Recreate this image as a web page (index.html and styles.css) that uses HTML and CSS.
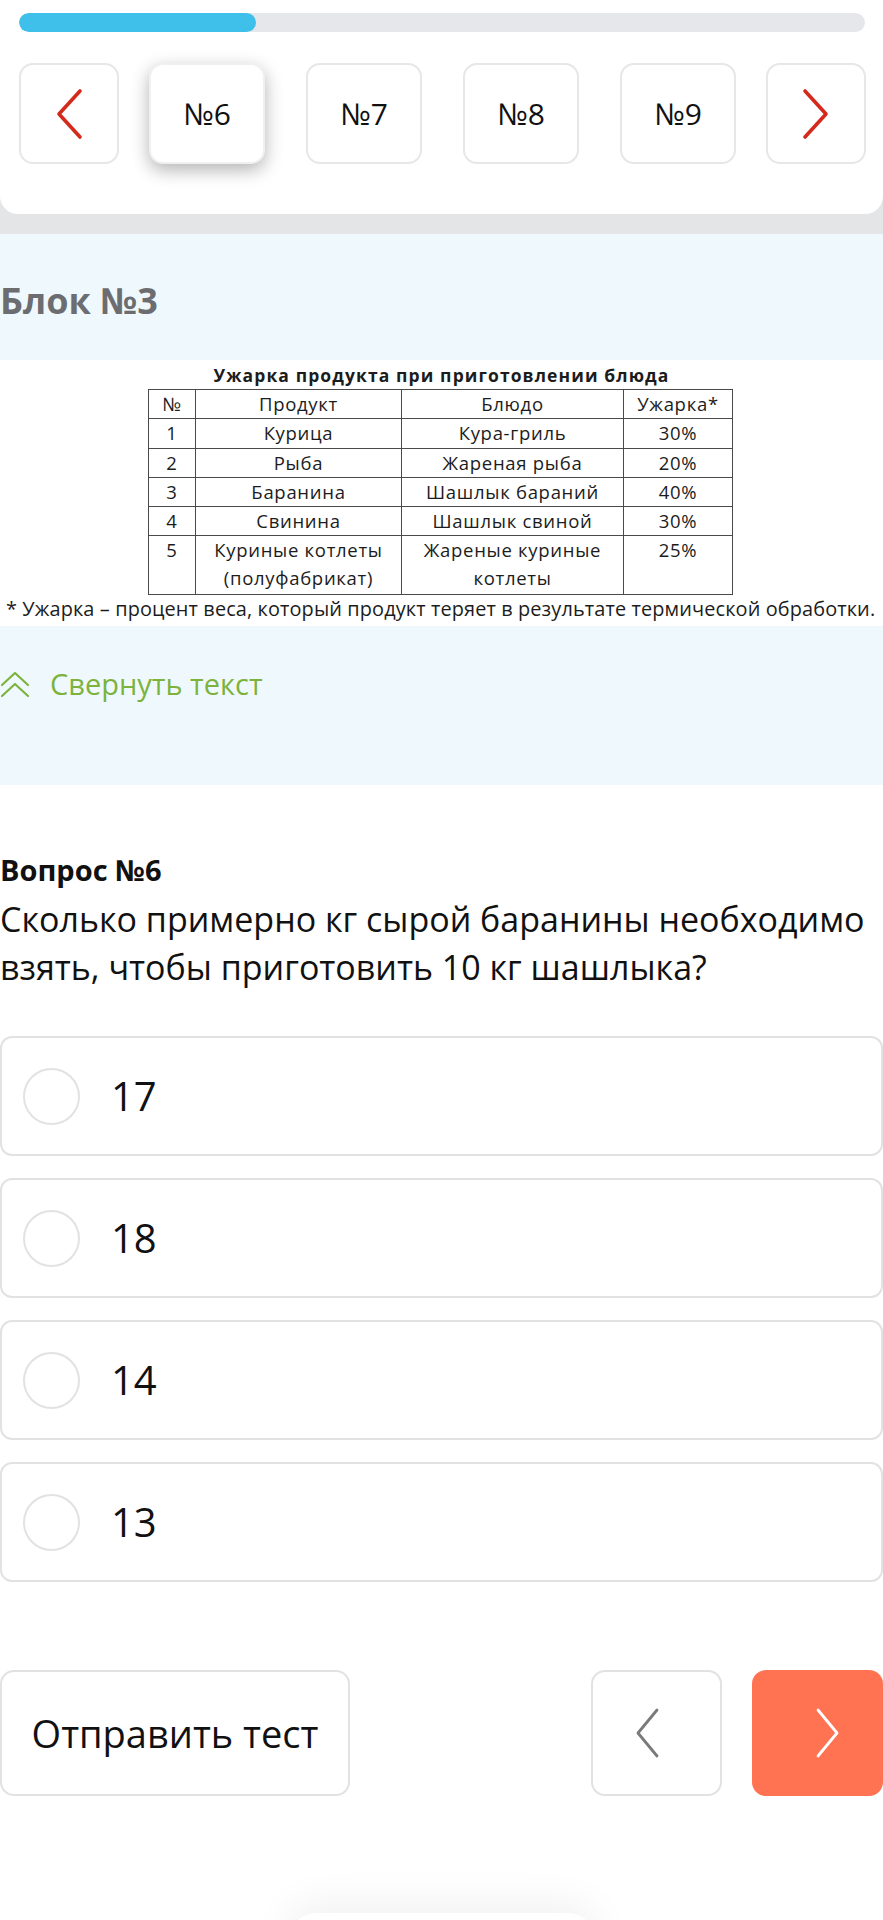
FILE: index.html
```html
<!DOCTYPE html>
<html lang="ru">
<head>
<meta charset="utf-8">
<title>Тест</title>
<link rel="stylesheet" href="styles.css">
</head>
<body>
<div class="top">
  <div class="nav-card">
    <div class="progress"><div class="progress-fill" style="width: 28%"></div></div>
    <div class="pager">
      <div class="pbtn arrow">
        <svg width="28" height="52" viewBox="0 0 28 52"><path d="M25 3 L4 26 L25 49" fill="none" stroke="#d42a1c" stroke-width="3.6" stroke-linecap="round" stroke-linejoin="round"/></svg>
      </div>
      <div class="nums">
        <div class="pbtn num active">№6</div>
        <div class="pbtn num">№7</div>
        <div class="pbtn num">№8</div>
        <div class="pbtn num">№9</div>
      </div>
      <div class="pbtn arrow">
        <svg width="28" height="52" viewBox="0 0 28 52"><path d="M3 3 L24 26 L3 49" fill="none" stroke="#d42a1c" stroke-width="3.6" stroke-linecap="round" stroke-linejoin="round"/></svg>
      </div>
    </div>
  </div>
</div>

<div class="block-head">Блок №3</div>

<div class="table-wrap">
  <div class="t-title">Ужарка продукта при приготовлении блюда</div>
  <table class="data">
    <tr><td class="c1">№</td><td class="c2">Продукт</td><td class="c3">Блюдо</td><td class="c4">Ужарка*</td></tr>
    <tr><td>1</td><td>Курица</td><td>Кура-гриль</td><td>30%</td></tr>
    <tr><td>2</td><td>Рыба</td><td>Жареная рыба</td><td>20%</td></tr>
    <tr><td>3</td><td>Баранина</td><td>Шашлык бараний</td><td>40%</td></tr>
    <tr><td>4</td><td>Свинина</td><td>Шашлык свиной</td><td>30%</td></tr>
    <tr class="tall"><td>5</td><td>Куриные котлеты<br>(полуфабрикат)</td><td>Жареные куриные<br>котлеты</td><td>25%</td></tr>
  </table>
  <div class="t-note">* Ужарка – процент веса, который продукт теряет в результате термической обработки.</div>
</div>

<div class="collapse">
  <svg class="dbl" width="30" height="30" viewBox="0 0 30 30"><path d="M2 15 L15 3 L28 15 M2 26 L15 14 L28 26" fill="none" stroke="#7db33c" stroke-width="2.2" stroke-linecap="round" stroke-linejoin="round"/></svg>
  <span>Свернуть текст</span>
</div>

<div class="question">
  <div class="q-label">Вопрос №6</div>
  <div class="q-text">Сколько примерно кг сырой баранины необходимо взять, чтобы приготовить 10 кг шашлыка?</div>
  <div class="answers">
    <div class="answer"><span class="radio"></span><span class="a-text">17</span></div>
    <div class="answer"><span class="radio"></span><span class="a-text">18</span></div>
    <div class="answer"><span class="radio"></span><span class="a-text">14</span></div>
    <div class="answer"><span class="radio"></span><span class="a-text">13</span></div>
  </div>
</div>

<div class="actions">
  <div class="send">Отправить тест</div>
  <div class="spacer"></div>
  <div class="step prev">
    <svg width="26" height="52" viewBox="0 0 26 52"><path d="M23 3 L4 26 L23 49" fill="none" stroke="#7a7a7a" stroke-width="2.8" stroke-linecap="round" stroke-linejoin="round"/></svg>
  </div>
  <div class="step next">
    <svg width="26" height="52" viewBox="0 0 26 52"><path d="M3 3 L22 26 L3 49" fill="none" stroke="#ffffff" stroke-width="2.8" stroke-linecap="round" stroke-linejoin="round"/></svg>
  </div>
</div>

<div class="bottom-pill"></div>
</body>
</html>
```

FILE: styles.css
```css
html, body {
  margin: 0;
  padding: 0;
  background: #ffffff;
  font-family: "Open Sans", "Noto Sans", sans-serif;
  color: #111;
  overflow: hidden;
}

.top {
  background: #e4e5e7;
  padding-bottom: 20px;
}

.nav-card {
  background: #ffffff;
  border-radius: 0 0 18px 18px;
  padding: 13px 18px 50px 19px;
}

.progress {
  height: 19px;
  border-radius: 10px;
  background: #e6e7ea;
  overflow: hidden;
}

.progress-fill {
  height: 100%;
  background: #3ec0ea;
  border-radius: 10px;
}

.pager {
  margin-top: 31px;
  display: flex;
  align-items: center;
  gap: 30px;
}

.nums {
  display: flex;
  gap: 41px;
}

.pbtn {
  box-sizing: border-box;
  height: 101px;
  border: 2px solid #e7e7e7;
  border-radius: 14px;
  background: #fff;
  display: flex;
  align-items: center;
  justify-content: center;
  flex: none;
}

.pbtn.arrow { width: 100px; }
.pbtn.num {
  width: 116px;
  font-size: 30px;
  color: #111;
}

.pbtn.active {
  border-color: #f0f0f0;
  box-shadow: 0 6px 18px rgba(0, 0, 0, 0.3);
}

.block-head {
  background: #eff9fd;
  height: 126px;
  box-sizing: border-box;
  padding-top: 43px;
  font-size: 36px;
  font-weight: 700;
  color: #6c6d70;
  line-height: 48px;
}

.table-wrap {
  background: #fff;
  height: 266px;
  box-sizing: border-box;
  padding-top: 2px;
  font-family: "Open Sans", sans-serif;
  color: #1c1c1c;
  overflow: hidden;
}

.t-title {
  text-align: center;
  font-weight: 700;
  font-size: 17.5px;
  letter-spacing: 1.1px;
  line-height: 26px;
}

.data {
  margin: 1px 0 0 148px;
  border-collapse: collapse;
  table-layout: fixed;
  width: 584px;
  font-size: 18.5px;
  letter-spacing: 0.7px;
  line-height: 28px;
}

.data td {
  box-sizing: border-box;
  border: 1.5px solid #4a4a4a;
  text-align: center;
  vertical-align: top;
  padding: 0;
  height: 29.3px;
}

.data .c1 { width: 47px; }
.data .c2 { width: 206px; }
.data .c3 { width: 222px; }
.data .c4 { width: 109px; }

.data .tall td { height: 58.6px; }

.t-note {
  font-size: 19.9px;
  letter-spacing: 0.12px;
  line-height: 26px;
  margin: 1px 0 0 6px;
  white-space: nowrap;
}

.collapse {
  background: #eff9fd;
  height: 159px;
  box-sizing: border-box;
  padding-top: 38px;
  display: flex;
  align-items: flex-start;
  gap: 20px;
  color: #7db33c;
  font-size: 29px;
  line-height: 40px;
}

.collapse .dbl {
  margin-top: 6px;
  flex: none;
}

.question {
  padding-top: 67px;
}

.q-label {
  font-size: 29px;
  font-weight: 700;
  line-height: 36px;
}

.q-text {
  margin-top: 7px;
  font-size: 34px;
  line-height: 48px;
}

.answers {
  margin-top: 45px;
  display: flex;
  flex-direction: column;
  gap: 22px;
}

.answer {
  box-sizing: border-box;
  height: 120px;
  border: 2px solid #e2e2e2;
  border-radius: 12px;
  display: flex;
  align-items: center;
  padding-left: 21px;
}

.radio {
  box-sizing: border-box;
  width: 57px;
  height: 57px;
  border: 2px solid #e2e2e2;
  border-radius: 50%;
  flex: none;
}

.a-text {
  margin-left: 31px;
  font-size: 40px;
  line-height: 56px;
}

.actions {
  margin-top: 88px;
  display: flex;
  align-items: center;
  gap: 30px;
}

.send {
  box-sizing: border-box;
  width: 350px;
  height: 126px;
  border: 2px solid #e2e2e2;
  border-radius: 14px;
  display: flex;
  align-items: center;
  justify-content: center;
  font-size: 38px;
}

.spacer { flex: 1; }

.step {
  box-sizing: border-box;
  width: 131px;
  height: 126px;
  border-radius: 14px;
  display: flex;
  align-items: center;
  justify-content: center;
}

.step.prev {
  border: 2px solid #e2e2e2;
  padding-right: 20px;
}

.step.next {
  background: #ff7252;
  padding-left: 20px;
}

.bottom-pill {
  width: 310px;
  height: 60px;
  margin: 117px auto 0;
  border-radius: 30px;
  background: #fff;
  box-shadow: 0 -10px 40px rgba(0, 0, 0, 0.06);
}
```
